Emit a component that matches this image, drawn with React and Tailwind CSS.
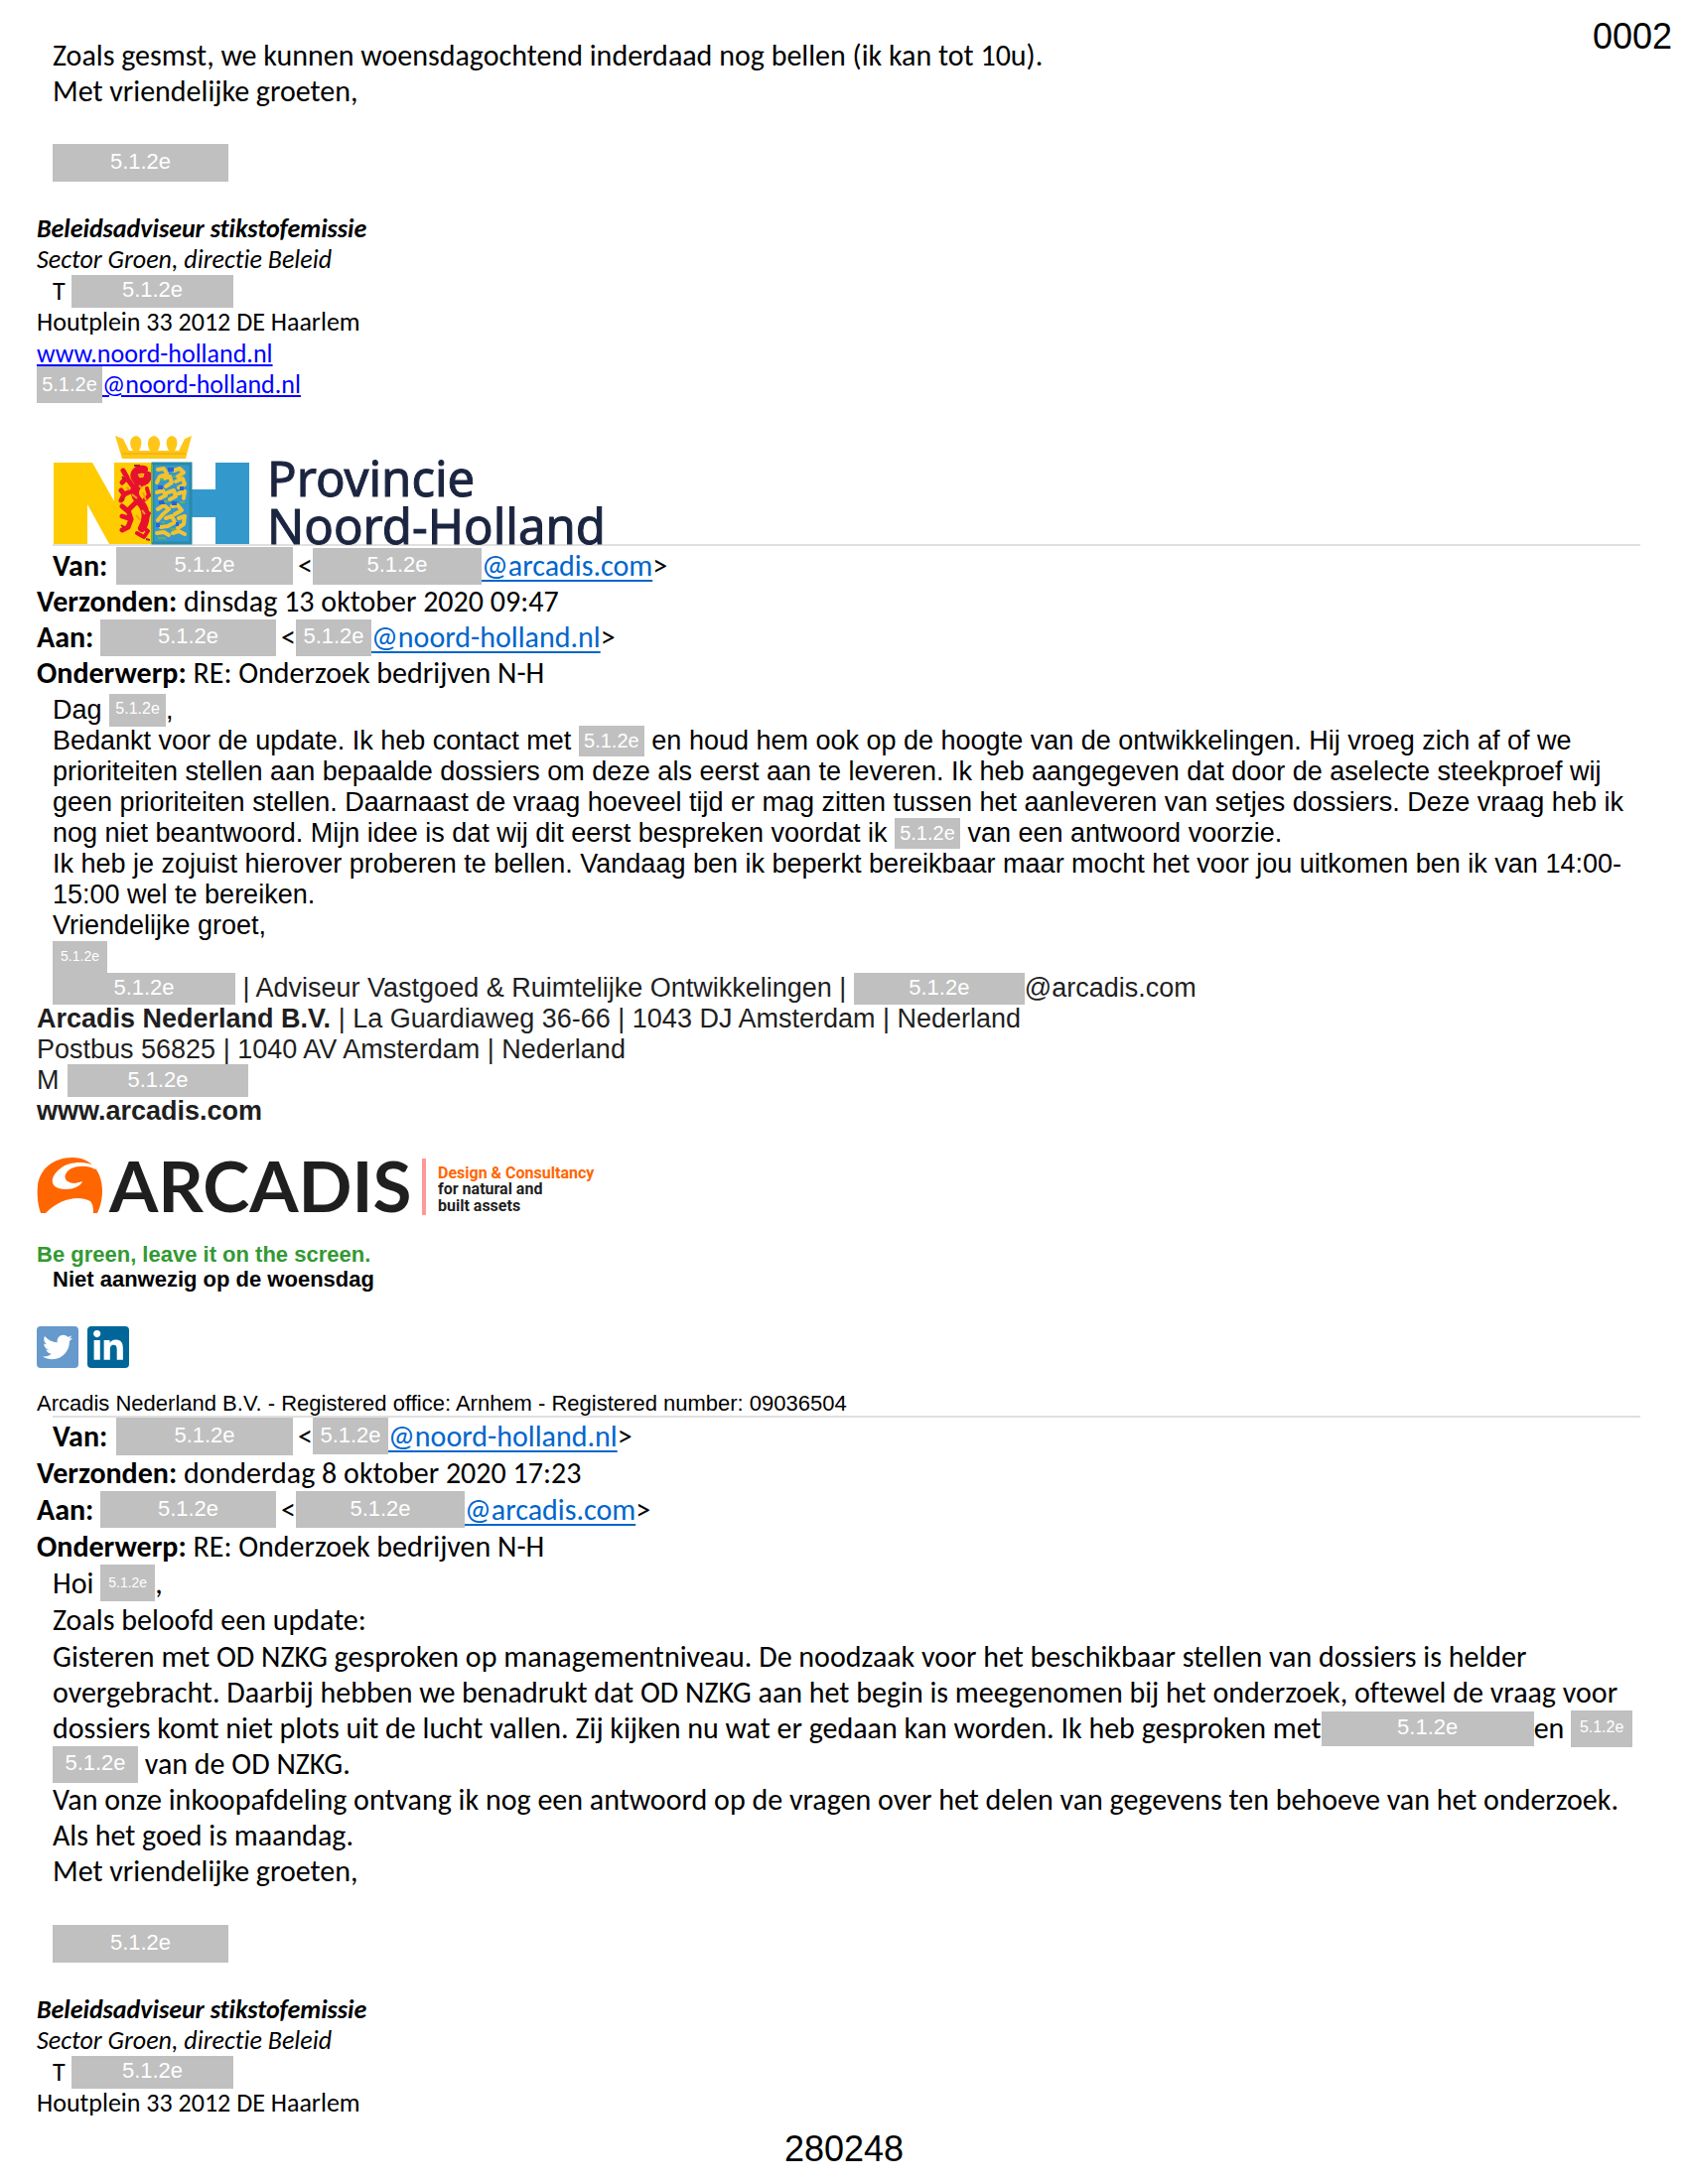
import { FaTwitter, FaLinkedinIn } from "react-icons/fa";

function Box({ className = "" }) {
  return (
    <span
      className={
        "-my-2 inline-flex shrink-0 items-center justify-center bg-[#c0c0c0] pb-0.5 font-['Liberation_Sans',Arial,sans-serif] font-normal not-italic leading-none text-white " +
        className
      }
    >
      5.1.2e
    </span>
  );
}

function Row({ className = "", children }) {
  return <div className={"flex items-center whitespace-pre " + className}>{children}</div>;
}

function MailLink({ href, children }) {
  return (
    <a href={href} className="text-[#0066cc] underline decoration-2 underline-offset-4">
      {children}
    </a>
  );
}

function Signature({ full }) {
  return (
    <div className="text-[26px] leading-[31px]">
      <p className="font-bold italic">Beleidsadviseur stikstofemissie</p>
      <p className="italic">Sector Groen, directie Beleid</p>
      <Row className="h-8 pl-4">
        <span className="w-[19px]">T</span>
        <Box className="h-[33px] w-[163px] text-[22px]" />
      </Row>
      <p>Houtplein 33 2012 DE Haarlem</p>
      {full && (
        <>
          <Row className="h-8">
            <a href="#site" className="text-[#0000ff] underline underline-offset-2">www.noord-holland.nl</a>
          </Row>
          <Row>
            <Box className="h-[37px] w-[66px] text-[20px]" />
            <a href="#mail" className="text-[#0000ff] underline underline-offset-2">@noord-holland.nl</a>
          </Row>
        </>
      )}
    </div>
  );
}

function MailHeader({ from, to, date, className }) {
  return (
    <div className={"text-[30px] " + className}>
      <Row className="pl-4">
        <b className="w-16">Van:</b>
        <Box className="h-[38px] w-[178px] text-[22px]" />
        <span className="w-5 text-right">{"<"}</span>
        {from}
        {">"}
      </Row>
      <Row>
        <b>Verzonden: </b>
        {date}
      </Row>
      <Row>
        <b className="w-16">Aan:</b>
        <Box className="h-[37px] w-[177px] text-[22px]" />
        <span className="w-5 text-right">{"<"}</span>
        {to}
        {">"}
      </Row>
      <Row>
        <b>Onderwerp: </b>RE: Onderzoek bedrijven N-H
      </Row>
    </div>
  );
}

const holland = (
  <>
    <Box className="h-[37px] w-[76px] text-[22px]" />
    <MailLink href="#holland">@noord-holland.nl</MailLink>
  </>
);
const arcadis = (
  <>
    <Box className="h-[37px] w-[170px] text-[22px]" />
    <MailLink href="#arcadis">@arcadis.com</MailLink>
  </>
);

function ProvinceLogo() {
  return (
    <svg width="570" height="112" viewBox="0 0 570 112" role="img" aria-label="Provincie Noord-Holland" className="ml-4 mt-[33px] block overflow-visible">
      {/* crown */}
      <path
        d="M63 3 L71 6 L77 18 L81 18 C76 11 78 4 84 3 C90 4 91 11 87 18 L98 18 C94 11 96 4 102 3 C108 4 110 11 106 18 L117 18 C113 11 114 4 120 3 C126 4 127 11 123 18 L127 18 L133 6 L140 3 L134 26 L70 26 Z"
        fill="#ffc61a"
      />
      <path d="M70 21 H134" stroke="#e9a900" strokeWidth="1" />
      {/* N */}
      <path d="M1 30 H40 L62 69 V30 H100 V112 H57 L35 72 V112 H1 Z" fill="#ffcc00" />
      {/* H */}
      <path d="M100 30 H140 V57 H164 V30 H198 V112 H164 V85 H140 V112 H100 Z" fill="#3399cc" />
      <path d="M101 31 H139 V111 H101 Z" fill="none" stroke="#2b8aa8" strokeWidth="3" />
      {/* red lion */}
      <g fill="none" stroke="#e8112d" strokeLinecap="round" strokeLinejoin="round">
        <path d="M92 37 C84 36 80 42 84 47 C88 52 95 50 96 43 M90 49 C82 56 80 62 88 70 C95 77 95 88 90 96" strokeWidth="8" />
        <path d="M71 38 L75 45 L70 50 M75 46 L83 57 L72 62 L69 58 M72 62 L69 68" strokeWidth="5" />
        <path d="M86 68 L76 78 L79 87 L70 84 M76 79 L70 74 M79 87 L76 95 L70 98" strokeWidth="5" />
        <path d="M90 94 L96 99 L92 105 L85 101 M94 88 L97 81 M95 56 L97 63 L93 67" strokeWidth="4" />
      </g>
      <path d="M86 42 l5 1 M80 62 l5 4 M84 83 l4 5 M91 60 l3 8 M74 55 l4 2 M90 78 l3 4 M87 53 l3 3" stroke="#f59a1c" strokeWidth="2" />
      <path d="M70 44 l2 3 M69 66 l3 2 M69 93 l3 2 M94 107 l4 1 M82 33 l6 0" stroke="#a3261f" strokeWidth="2" />
      {/* gold lions on the blue field */}
      <g fill="none" stroke="#f2c230" strokeWidth="4" strokeLinecap="round" strokeLinejoin="round">
        <path d="M106 37 L112 36 L115 41 L108 44 L105 50 M112 46 L118 44 L120 50 L114 54" />
        <path d="M122 38 L128 36 L132 40 L126 44 M124 49 L131 46 L133 52 L127 55" />
        <path d="M105 60 L111 58 L114 63 L108 66 M116 60 L122 58 L124 64 L118 67 M127 61 L133 59 L132 66" />
        <path d="M106 77 L112 73 L117 77 L111 82 L106 88 M120 74 L126 73 L130 78 L123 82" />
        <path d="M114 86 L120 84 L123 90 L116 94 L109 95 M127 86 L133 84 L132 92 L126 96" />
        <path d="M105 101 L112 100 L117 103 M121 101 L127 99 L133 102" />
      </g>
      <g stroke="#2a62d8" strokeWidth="4">
        <path d="M116 37 h6 M106 55 h5 M120 71 h5 M107 70 h6 M124 92 h3 M104 93 h4 M128 56 h4" />
      </g>
      <g stroke="#6fae55" strokeWidth="2">
        <path d="M108 47 h4 M121 44 h3 M112 69 h5 M128 70 h5 M119 97 h5 M106 106 h8 M110 90 h3 M100 32 v78" />
      </g>
      <g fill="#1b2540" stroke="#1b2540" strokeWidth="1" fontFamily="'Noto Sans','Open Sans',sans-serif" fontSize="49">
        <text x="216" y="64">Provincie</text>
        <text x="216" y="112">Noord-Holland</text>
      </g>
    </svg>
  );
}

function ArcadisLogo() {
  return (
    <svg width="580" height="60" viewBox="0 0 580 60" role="img" aria-label="Arcadis" className="mt-[31px] block overflow-visible">
      <path
        d="M4 56 C1 48 0 37 1 28 C3 12 16 0 36 0 C56 0 66 16 66 33 C66 42 64 50 61 56 L57 56 C57 50 56 46 54 44 C42 38 24 41 9 56 Z"
        fill="#ff6600"
      />
      <path
        d="M59 9 C50 3 32 4 24 11 C14 18 13 28 22 31 C32 34 44 30 46 24 C40 26 36 27 31 24 C26 20 29 14 35 11 C42 8 52 8 59 12 Z"
        fill="#ffffff"
      />
      <text x="73" y="55" fill="#1f1f1f" fontFamily="Lato,sans-serif" fontWeight="700" fontSize="71">ARCADIS</text>
      <rect x="388" y="1" width="4" height="57" fill="#ff9999" />
      <g fontFamily="Roboto,sans-serif" fontWeight="700" fontSize="16">
        <text x="404" y="21" fill="#ff6600">Design &amp; Consultancy</text>
        <text x="404" y="37" fill="#1f1f1f">for natural and</text>
        <text x="404" y="54" fill="#1f1f1f">built assets</text>
      </g>
    </svg>
  );
}

export default function App() {
  return (
    <main className="min-h-screen bg-white pb-4 font-['Carlito','Lato',sans-serif] text-black [font-variant-ligatures:none]">
      <div className="flex items-start justify-between pl-[53px] pr-4">
        <div className="pt-[38px] text-[30px] leading-9">
          <p>Zoals gesmst, we kunnen woensdagochtend inderdaad nog bellen (ik kan tot 10u).</p>
          <p>Met vriendelijke groeten,</p>
        </div>
        <p className="pt-[17px] font-['Liberation_Sans',Arial,sans-serif] text-[36px] leading-10">0002</p>
      </div>

      <div className="pl-[37px] pr-12">
        <div className="mt-[43px] flex pl-4">
          <Box className="h-[38px] w-[177px] text-[22px]" />
        </div>
        <div className="mt-10">
          <Signature full />
        </div>
        <ProvinceLogo />
        <hr className="ml-4 border-t-2 border-[#e0e0e0]" />
        <MailHeader className="mt-0.5 leading-9" from={arcadis} to={holland} date="dinsdag 13 oktober 2020 09:47" />

        <div className="mt-[3px] font-['Liberation_Sans',Arial,sans-serif] text-[27px] leading-[31px]">
          <div className="pl-4">
            <Row className="h-8">
              {"Dag "}
              <Box className="h-[33px] w-[57px] text-[16px]" />,
            </Row>
            <Row>
              {"Bedankt voor de update. Ik heb contact met "}
              <Box className="h-[31px] w-[66px] text-[20px]" />
              {" en houd hem ook op de hoogte van de ontwikkelingen. Hij vroeg zich af of we"}
            </Row>
            <Row>prioriteiten stellen aan bepaalde dossiers om deze als eerst aan te leveren. Ik heb aangegeven dat door de aselecte steekproef wij</Row>
            <Row>geen prioriteiten stellen. Daarnaast de vraag hoeveel tijd er mag zitten tussen het aanleveren van setjes dossiers. Deze vraag heb ik</Row>
            <Row>
              {"nog niet beantwoord. Mijn idee is dat wij dit eerst bespreken voordat ik "}
              <Box className="h-[31px] w-[66px] text-[20px]" />
              {" van een antwoord voorzie."}
            </Row>
            <Row>Ik heb je zojuist hierover proberen te bellen. Vandaag ben ik beperkt bereikbaar maar mocht het voor jou uitkomen ben ik van 14:00-</Row>
            <Row>15:00 wel te bereiken.</Row>
            <Row>Vriendelijke groet,</Row>
          </div>
          <div className="text-[#1f1f1f]">
            <Row className="h-8 pl-4">
              <Box className="h-8 w-[55px] text-[14px]" />
            </Row>
            <Row className="pl-4">
              <Box className="h-8 w-[184px] text-[22px]" />
              {" | Adviseur Vastgoed & Ruimtelijke Ontwikkelingen | "}
              <Box className="h-8 w-[172px] text-[22px]" />
              @arcadis.com
            </Row>
            <Row>
              <b>Arcadis Nederland B.V.</b>
              {" | La Guardiaweg 36-66 | 1043 DJ Amsterdam | Nederland"}
            </Row>
            <Row>Postbus 56825 | 1040 AV Amsterdam | Nederland</Row>
            <Row>
              <span className="w-[31px]">M</span>
              <Box className="h-[33px] w-[182px] text-[22px]" />
            </Row>
            <Row>
              <b>www.arcadis.com</b>
            </Row>
          </div>
        </div>

        <ArcadisLogo />

        <div className="mt-[25px] font-['Liberation_Sans',Arial,sans-serif] text-[22px] font-bold leading-[25px]">
          <p className="text-[#339933]">Be green, leave it on the screen.</p>
          <p className="pl-4">Niet aanwezig op de woensdag</p>
        </div>

        <div className="mt-[35px] flex gap-[9px]">
          <a href="#twitter" aria-label="Twitter" className="flex size-[42px] items-center justify-center rounded-sm bg-[#6699cc] text-white">
            <FaTwitter size={30} />
          </a>
          <a href="#linkedin" aria-label="LinkedIn" className="flex size-[42px] items-center justify-center rounded-sm bg-[#006699] text-white">
            <FaLinkedinIn size={34} />
          </a>
        </div>

        <p className="mt-6 font-['Liberation_Sans',Arial,sans-serif] text-[22px] leading-6">
          Arcadis Nederland B.V. - Registered office: Arnhem - Registered number: 09036504
        </p>
        <hr className="ml-4 border-t-2 border-[#e0e0e0]" />
        <MailHeader className="leading-[37px]" from={holland} to={arcadis} date="donderdag 8 oktober 2020 17:23" />

        <div className="pl-4 text-[30px] leading-9">
          <Row className="h-[37px]">
            {"Hoi "}
            <Box className="h-[37px] w-[55px] text-[14px]" />,
          </Row>
          <Row className="h-[37px]">Zoals beloofd een update:</Row>
          <Row className="h-[37px]">Gisteren met OD NZKG gesproken op managementniveau. De noodzaak voor het beschikbaar stellen van dossiers is helder</Row>
          <Row>overgebracht. Daarbij hebben we benadrukt dat OD NZKG aan het begin is meegenomen bij het onderzoek, oftewel de vraag voor</Row>
          <Row>
            {"dossiers komt niet plots uit de lucht vallen. Zij kijken nu wat er gedaan kan worden. Ik heb gesproken met"}
            <Box className="h-[35px] w-[214px] text-[22px]" />
            {"en "}
            <Box className="h-[37px] w-[62px] text-[16px]" />
          </Row>
          <Row>
            <Box className="h-[37px] w-[86px] text-[22px]" />
            {" van de OD NZKG."}
          </Row>
          <Row>Van onze inkoopafdeling ontvang ik nog een antwoord op de vragen over het delen van gegevens ten behoeve van het onderzoek.</Row>
          <Row>Als het goed is maandag.</Row>
          <Row>Met vriendelijke groeten,</Row>
        </div>

        <div className="mt-11 flex pl-4">
          <Box className="h-[38px] w-[177px] text-[22px]" />
        </div>
        <div className="mt-10">
          <Signature />
        </div>
      </div>
      <p className="mt-[11px] text-center font-['Liberation_Sans',Arial,sans-serif] text-[36px] leading-10">280248</p>
    </main>
  );
}
